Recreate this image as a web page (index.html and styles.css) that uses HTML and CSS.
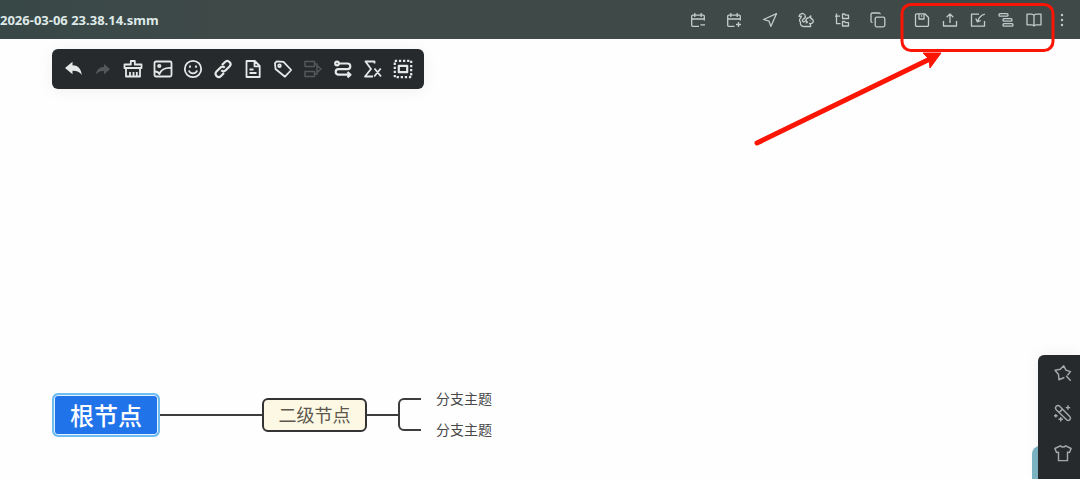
FILE: index.html
```html
<!DOCTYPE html>
<html lang="zh-CN">
<head>
  <meta charset="UTF-8">
  <meta name="viewport" content="width=device-width, initial-scale=1.0">
  <title>2026-03-06 23.38.14.smm</title>
  <link rel="stylesheet" href="styles.css">
</head>
<body>
  <header class="topbar">
    <h1 class="filename">2026-03-06 23.38.14.smm</h1>
    <div class="actions">
      <button aria-label="移除日程"><svg viewBox="0 0 16 16"><path d="M14.3 8.5V4.2a1 1 0 0 0-1-1H2.7a1 1 0 0 0-1 1v9.1a1 1 0 0 0 1 1H9M1.7 7h12.6M4.8 1v4M11.2 1v4M10.5 12.8H15"/></svg></button>
      <button aria-label="添加日程"><svg viewBox="0 0 16 16"><path d="M14.3 8.5V4.2a1 1 0 0 0-1-1H2.7a1 1 0 0 0-1 1v9.1a1 1 0 0 0 1 1H8.5M1.7 7h12.6M4.8 1v4M11.2 1v4M10 12.5h5M12.5 10v5"/></svg></button>
      <button aria-label="发送"><svg viewBox="0 0 16 16"><path d="M14.5 1.7 1.5 7.5l5.5 1.6 1.8 5.3z"/></svg></button>
      <button aria-label="松鼠"><svg viewBox="0 0 16 16"><path d="M5.5 14.5h7.2c.2-1.500-.2-2.300-1.200-3 2 .4 3.800-.5 3.800-2.200 0-1.300-1.300-2.600-2.500-3V3.800L11 5.600C9 5.800 8 7.200 8 8.600L5.700 10C4 9.200 4 8 5.200 7.200 7 6.400 7.700 5.300 7.200 3.600 6.600 1.800 4.600 1 3.200 1.900c-1.300.2-2 1.100-2.200 2.600l2.300-.3c.2 1-.2 1.600-1 2.200-1.200 1.200-1 2.700.2 3.700-.6 2 .8 4.400 3 4.400zM8 8.600l1.500 1.700-1.800 1M12.200 8v.6"/></svg></button>
      <button aria-label="目录树"><svg viewBox="0 0 16 16"><path d="M2.500 1.500v10.200h4M1 4.200h5M8.500 2h2l1 1.200h3v3.300h-6zM8.500 9.500h2l1 1.200h3V14h-6z"/></svg></button>
      <button aria-label="复制"><svg viewBox="0 0 16 16"><rect x="5.200" y="5.200" width="9.600" height="9.600" rx="1.500"/><path d="M2.500 10.300H2A1.200 1.200 0 0 1 1 9V2.200A1.200 1.200 0 0 1 2.200 1H9a1.200 1.200 0 0 1 1.200 1.200"/></svg></button>
    </div>
    <div class="actions actions-file">
      <button aria-label="保存"><svg viewBox="0 0 16 16"><path d="M1.500 3a1.200 1.200 0 0 1 1.200-1.200h8.100l3.700 3.700v7.600a1.200 1.200 0 0 1-1.200 1.200H2.700a1.200 1.200 0 0 1-1.200-1.200zM5 1.800V7h5V1.800M7.500 3.300v1.500"/></svg></button>
      <button aria-label="导出"><svg viewBox="0 0 16 16"><path d="M1.500 9v5h13V9M8 11V2M4.700 5.200 8 1.900l3.300 3.300"/></svg></button>
      <button aria-label="导入"><svg viewBox="0 0 16 16"><path d="M9 2.200H1.500v12h13V9M14.800 2.200C11 3 9 5.500 7.500 9.500M5.800 6.500l1.500 3.300 3.500-1.300"/></svg></button>
      <button aria-label="大纲"><svg viewBox="0 0 16 16"><rect x="1" y="1.700" width="9" height="2.500" rx="1"/><rect x="5" y="6.700" width="9" height="2.500" rx="1"/><rect x="5" y="11.700" width="10" height="2.500" rx="1"/></svg></button>
      <button aria-label="阅读"><svg viewBox="0 0 16 16"><path d="M8 3.500C7.500 2.500 6.500 2.200 5.500 2.200H1v10.600h4.800c1 0 1.800.3 2.200 1.200.4-.9 1.200-1.200 2.200-1.200H15V2.200h-4.500c-1 0-2 .3-2.500 1.300zM8 3.500V14"/></svg></button>
      <button aria-label="更多"><svg class="dots" viewBox="0 0 16 16"><circle cx="8" cy="3" r="1.200"/><circle cx="8" cy="8" r="1.200"/><circle cx="8" cy="13" r="1.200"/></svg></button>
    </div>
  </header>

  <main class="canvas">
    <div class="toolbar">
      <button aria-label="撤销"><svg class="solid" viewBox="0 0 20 20"><path d="M2 9 9.500 2.800v3.500c5 0 8.500 3 9.300 9.700C16.500 12.700 14 11.600 9.500 11.700v3.500z"/></svg></button>
      <button aria-label="重做" disabled><svg class="solid" viewBox="0 0 20 20"><path d="M17 10 11 5v3c-4.500 0-7.500 2.500-8 7.500 2-2.500 4.200-3.600 8-3.500v3.500z"/></svg></button>
      <button aria-label="格式刷"><svg viewBox="0 0 20 20"><path d="M1.500 9V5.500h6.300V2h4v3.500h6.700V9zM3 9v8.500h14V9M7 17v-4M10.500 17v-4M13.800 17v-4"/></svg></button>
      <button aria-label="图片"><svg viewBox="0 0 20 20"><rect x="1.500" y="2.500" width="17" height="15" rx="1.500"/><circle cx="6.300" cy="7" r="1.200"/><path d="M2 12.500c2.500 0 3.500.7 4.500 2.500 1.500-4 5-6.500 12-6"/></svg></button>
      <button aria-label="图标"><svg viewBox="0 0 20 20"><circle cx="10" cy="10" r="8.200"/><path d="M7 6.500v2.200M13 6.500v2.200M5.800 11.500c1.500 3.800 6.900 3.800 8.400 0"/></svg></button>
      <button aria-label="超链接"><svg class="bold" viewBox="0 0 20 20"><path d="m9 6 3-3c1.400-1.400 3.200-1.300 4.500 0s1.400 3.100 0 4.500l-3.800 3.800c-1.400 1.400-3.200 1.300-4.400 0M11 14l-3 3c-1.400 1.400-3.200 1.300-4.500 0s-1.400-3.100 0-4.500l3.800-3.800c1.400-1.400 3.200-1.300 4.400 0"/></svg></button>
      <button aria-label="备注"><svg viewBox="0 0 20 20"><path d="M3.500 2h8.300l4.900 5v11H3.500zM11.500 2.500v4.800h5M6.500 10.500h4M6.500 14h7"/></svg></button>
      <button aria-label="标签"><svg viewBox="0 0 20 20"><path d="M2 4.200 3.800 2.300l6.700.5 7.700 8.200-6.200 6.700L2.500 10z"/><circle cx="6.500" cy="6.700" r="1.300"/></svg></button>
      <button aria-label="概要" disabled><svg class="thin" viewBox="0 0 20 20"><path d="M2 2.500h9.500v5H2zM2 12.500h9.500v5H2zM11.500 5H14v10h-2.500M14 6.500l4 3.500-4 3.500"/></svg></button>
      <button aria-label="关联线"><svg class="bold" viewBox="0 0 20 20"><circle cx="4" cy="4.500" r="1.800"/><path d="M6 4.500h8.500a2.800 2.800 0 0 1 0 5.600h-9a2.800 2.800 0 0 0 0 5.600H17M14.500 13l3 2.700-3 2.700"/></svg></button>
      <button aria-label="公式"><svg viewBox="0 0 20 20"><path d="M11.500 4.500V2.500h-9L8 10l-6 7.500h8M11.500 9.500l6.500 8M17.700 9.500l-6.500 8"/></svg></button>
      <button aria-label="外框"><svg class="bold" viewBox="0 0 20 20"><rect class="dash" x="1.800" y="1.800" width="16.400" height="16.400"/><rect x="5.800" y="6.800" width="8.400" height="6.400"/></svg></button>
    </div>

    <div class="mindmap">
      <svg class="links" viewBox="0 0 370 60">
        <path d="M108 22H210M315 22H347M369 6H352a5 5 0 0 0-5 5v21a5 5 0 0 0 5 5H369"/>
      </svg>
      <div class="node root">根节点</div>
      <div class="node second">二级节点</div>
      <div class="node leaf leaf-1">分支主题</div>
      <div class="node leaf leaf-2">分支主题</div>
    </div>
  </main>

  <div class="drawer-edge"></div>
  <aside class="sidebar">
    <button aria-label="节点样式"><svg viewBox="0 0 20 20"><path d="M11.500 15 5.500 17.500 5 11.700 1.200 7l5.800-1.200L10.800 2l2.500 4.800 5 1.700-3.300 4M13.500 13l5 5.500"/></svg></button>
    <button aria-label="基础样式"><svg viewBox="0 0 20 20"><path d="M2.500 2.500c1.200-1.200 2.800-1 3.800 0l11.200 11.500c1 1.200 1 2.500 0 3.500s-2.500 1-3.500 0L2.500 6.300c-1-1-1-2.600 0-3.800zM9.500 5.700 5.700 9.500M15.500 1.500v5M13 4h5M7.500 14.500v5M5 17h5M2 11v4M0 13h4"/></svg></button>
    <button aria-label="主题"><svg viewBox="0 0 20 20"><path d="M7 2c1.500 1.900 4.500 1.900 6 0l6 3-1.800 4.500-2.200-.5v9.500H5V9l-2.200.5L1 5z"/></svg></button>
  </aside>

  <svg class="callout" viewBox="0 0 330 150">
    <rect x="152" y="4.500" width="151" height="46" rx="9"/>
    <path class="shaft" d="M7 143 182 58"/>
    <path class="head" d="M191 53H173L179 59 180 68z"/>
  </svg>
</body>
</html>
```
FILE: styles.css
```css
* {
  box-sizing: border-box;
}
body {
  margin: 0;
  min-height: 100vh;
  display: flex;
  flex-direction: column;
  position: relative;
  overflow: hidden;
  background: #fefefe;
  font-family: "Noto Sans", "Noto Sans CJK SC", sans-serif;
}
button {
  display: flex;
  align-items: center;
  justify-content: center;
  padding: 0;
  border: none;
  background: none;
  color: inherit;
  cursor: pointer;
}
svg {
  fill: none;
  stroke: currentColor;
  stroke-linejoin: round;
}

/* top bar */
.topbar {
  display: flex;
  align-items: center;
  gap: 12px;
  height: 39px;
  padding-right: 4px;
  background: linear-gradient(90deg, #384847, #3e4948 20%);
  color: #c3cccb;
}
.filename {
  flex: 1;
  margin: 0;
  font-size: 13px;
  font-weight: 700;
  color: #dfe9e8;
}
.actions {
  display: flex;
}
.actions button {
  width: 36px;
  height: 38px;
}
.actions-file button {
  width: 28px;
}
.actions svg {
  width: 16px;
  height: 16px;
  stroke-width: 1.3;
}
.actions .dots {
  fill: currentColor;
  stroke: none;
}

/* canvas */
.canvas {
  flex: 1;
  position: relative;
  padding: 10px 52px;
}
.toolbar {
  display: flex;
  width: max-content;
  padding: 0 6px;
  border-radius: 6px;
  background: #262a2d;
  color: #e6e8e8;
  box-shadow: 0 2px 16px rgba(0, 0, 0, 0.06);
}
.toolbar button {
  width: 30px;
  height: 40px;
}
.toolbar button:disabled {
  color: #54585a;
}
.toolbar svg {
  width: 20px;
  height: 20px;
  stroke-width: 1.8;
}
.toolbar .solid {
  fill: currentColor;
  stroke: none;
}
.toolbar .thin {
  stroke-width: 1.5;
}
.toolbar .bold {
  stroke-width: 2.2;
}
.toolbar .dash {
  stroke-dasharray: 2.3 1.8;
}

/* mind map */
.mindmap {
  position: absolute;
  left: 52px;
  top: 354px;
}
.links {
  position: absolute;
  left: 0;
  top: 0;
  width: 370px;
  height: 60px;
  stroke: #3d3d3d;
  stroke-width: 2;
}
.node {
  position: absolute;
  display: flex;
  align-items: center;
  justify-content: center;
  white-space: nowrap;
}
.root {
  left: 0;
  top: 0;
  width: 108px;
  height: 44px;
  padding-bottom: 2px;
  border: 2px solid #6fbdf2;
  border-radius: 6px;
  background: #2173ea;
  box-shadow: inset 0 0 0 1px #e3f2ff;
  color: #fff;
  font-size: 24px;
  font-weight: 500;
}
.second {
  left: 210px;
  top: 5px;
  width: 105px;
  height: 34px;
  padding-bottom: 2px;
  border: 2px solid #333;
  border-radius: 6px;
  background: #fcf8e4;
  color: #5c564c;
  font-size: 18px;
}
.leaf {
  left: 384px;
  height: 20px;
  color: #484848;
  font-size: 14px;
}
.leaf-1 {
  top: -5px;
}
.leaf-2 {
  top: 26px;
}

/* right panel */
.sidebar {
  position: absolute;
  right: 0;
  top: 355px;
  bottom: 0;
  width: 42px;
  padding-left: 8px;
  border-radius: 6px 0 0 0;
  background: #262a2d;
  color: #a5a9aa;
  box-shadow: 0 0 16px rgba(0, 0, 0, 0.06);
}
.sidebar button {
  width: 34px;
  height: 36px;
  margin-bottom: 4px;
}
.sidebar svg {
  width: 18px;
  height: 18px;
  stroke-width: 1.6;
}
.drawer-edge {
  position: absolute;
  right: 0;
  top: 446px;
  bottom: 0;
  width: 48px;
  border-radius: 8px 0 0 0;
  background: #7db5c5;
}

/* red marker over the file buttons */
.callout {
  position: absolute;
  right: 0;
  top: 0;
  width: 330px;
  height: 150px;
  stroke: #fb1505;
  stroke-width: 3;
  pointer-events: none;
}
.callout .shaft {
  stroke-width: 5;
  stroke-linecap: round;
}
.callout .head {
  fill: #fb1505;
  stroke-width: 1;
}
```
